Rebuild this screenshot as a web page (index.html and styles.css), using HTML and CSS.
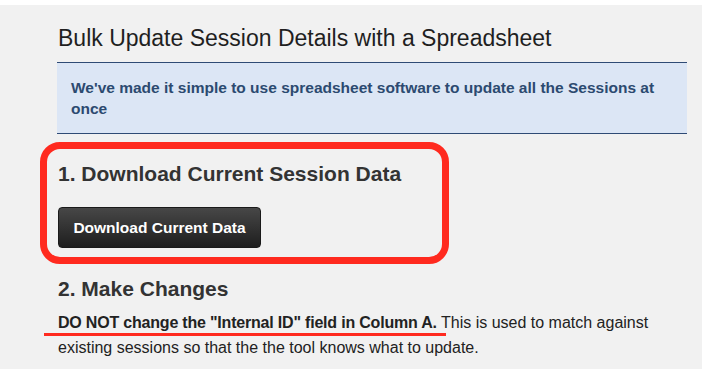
FILE: index.html
```html
<!DOCTYPE html>
<html lang="en">
<head>
    <meta charset="UTF-8">
    <meta name="viewport" content="width=device-width, initial-scale=1.0">
    <title>Bulk Update Sessions</title>
    <link rel="stylesheet" href="styles.css">
</head>
<body>
    <div id="page">
        <h1 class="page-title">Bulk Update Session Details with a Spreadsheet</h1>
        <div class="info-box">
            We've made it simple to use spreadsheet software to update all the Sessions at once
        </div>

        <div class="step step-highlight">
            <h3 class="step-title">1. Download Current Session Data</h3>
            <button class="btn-dark">Download Current Data</button>
        </div>

        <div class="step">
            <h3 class="step-title step-title-2">2. Make Changes</h3>
            <p class="step-text">
                <strong class="marked">DO NOT change the "Internal ID" field in Column A.</strong>
                This is used to match against existing sessions so that the the tool knows what to update.
            </p>
        </div>
    </div>
</body>
</html>
```

FILE: styles.css
```css
body {
    margin: 0;
    border-top: 5px solid #ffffff;
    background-color: #f1f1f1;
    font-family: "Liberation Sans", Arial, sans-serif;
    color: #222222;
    height: 364px;
    overflow: hidden;
}

#page {
    width: 630px;
    padding-left: 57px;
}

.page-title {
    margin: 18px 0 9px 1px;
    font-size: 23px;
    line-height: 30px;
    font-weight: normal;
    color: #1f1f1f;
}

.info-box {
    background: #dce6f5;
    border-top: 1px solid #2f4b75;
    border-bottom: 1px solid #2f4b75;
    padding: 14px 12px 14px 14px;
    font-size: 15.5px;
    line-height: 21px;
    font-weight: bold;
    color: #2c4a70;
}

.step {
    margin-top: 28px;
}

.step-highlight {
    position: relative;
}

/* red annotation ring round step 1 */
.step-highlight::before {
    content: "";
    position: absolute;
    left: -17px;
    top: -20px;
    width: 395px;
    height: 108px;
    border: 7px solid #ff2a1f;
    border-radius: 20px;
    pointer-events: none;
}

.step-title {
    margin: 0 0 0 1px;
    font-size: 21px;
    line-height: 24px;
    font-weight: bold;
    color: #333333;
}

.step-title-2 {
    margin-top: 29px;
}

.step-highlight + .step {
    margin-top: 0;
}

.btn-dark {
    display: block;
    margin: 21px 0 0 1px;
    width: 203px;
    height: 41px;
    padding: 0;
    background: linear-gradient(#474747, #1e1e1e);
    border: 1px solid #1a1a1a;
    border-radius: 4px;
    color: #ffffff;
    font-family: inherit;
    font-size: 15.5px;
    font-weight: bold;
    cursor: pointer;
}

.step-text {
    margin: 9px 0 0 1px;
    font-size: 16px;
    line-height: 25px;
    color: #222222;
}

.marked {
    position: relative;
    letter-spacing: -0.2px;
}

/* red annotation underline */
.marked::after {
    content: "";
    position: absolute;
    left: -14px;
    right: -9px;
    bottom: -5px;
    height: 3px;
    background: #ff2a1f;
}
```
